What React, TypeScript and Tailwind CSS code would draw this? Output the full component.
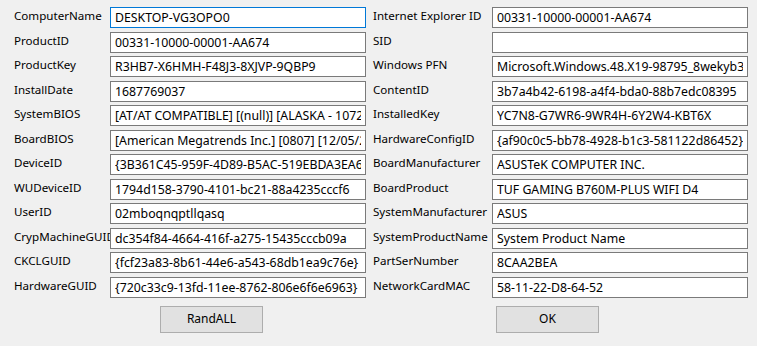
const left: [string, string][] = [
  ['ComputerName', 'DESKTOP-VG3OPO0'],
  ['ProductID', '00331-10000-00001-AA674'],
  ['ProductKey', 'R3HB7-X6HMH-F48J3-8XJVP-9QBP9'],
  ['InstallDate', '1687769037'],
  ['SystemBIOS', '[AT/AT COMPATIBLE] [(null)] [ALASKA - 1072009]'],
  ['BoardBIOS', '[American Megatrends Inc.] [0807] [12/05/2022]'],
  ['DeviceID', '{3B361C45-959F-4D89-B5AC-519EBDA3EA62}'],
  ['WUDeviceID', '1794d158-3790-4101-bc21-88a4235cccf6'],
  ['UserID', '02mboqnqptllqasq'],
  ['CrypMachineGUID', 'dc354f84-4664-416f-a275-15435cccb09a'],
  ['CKCLGUID', '{fcf23a83-8b61-44e6-a543-68db1ea9c76e}'],
  ['HardwareGUID', '{720c33c9-13fd-11ee-8762-806e6f6e6963}'],
]

const right: [string, string][] = [
  ['Internet Explorer ID', '00331-10000-00001-AA674'],
  ['SID', ''],
  ['Windows PFN', 'Microsoft.Windows.48.X19-98795_8wekyb3d8bbwe'],
  ['ContentID', '3b7a4b42-6198-a4f4-bda0-88b7edc08395'],
  ['InstalledKey', 'YC7N8-G7WR6-9WR4H-6Y2W4-KBT6X'],
  ['HardwareConfigID', '{af90c0c5-bb78-4928-b1c3-581122d86452}'],
  ['BoardManufacturer', 'ASUSTeK COMPUTER INC.'],
  ['BoardProduct', 'TUF GAMING B760M-PLUS WIFI D4'],
  ['SystemManufacturer', 'ASUS'],
  ['SystemProductName', 'System Product Name'],
  ['PartSerNumber', '8CAA2BEA'],
  ['NetworkCardMAC', '58-11-22-D8-64-52'],
]

function Field({ label, value, labelWidth, focused }: { label: string; value: string; labelWidth: string; focused?: boolean }) {
  return (
    <div className="flex h-[21px] items-start">
      <div className={`${labelWidth} shrink-0 whitespace-nowrap pt-[1px] text-[11.6px] leading-[16px]`}>{label}</div>
      <input
        readOnly
        value={value}
        className={`h-[21px] w-[256px] shrink-0 border bg-white px-[4px] text-[12.3px] leading-[19px] text-black outline-none ${
          focused ? 'border-[#0078d7]' : 'border-[#7a7a7a]'
        }`}
      />
    </div>
  )
}

export default function App() {
  return (
    <div
      className="h-[346px] w-[757px] overflow-hidden bg-[#f0f0f0] text-[12px] text-black"
      style={{ fontFamily: '"Noto Sans", "Open Sans", sans-serif' }}
    >
      <div className="flex pl-[14px] pt-[7px]">
        <div className="flex flex-col gap-[3.5px]">
          {left.map(([l, v], i) => (
            <Field key={l} label={l} value={v} labelWidth="w-[96px]" focused={i === 0} />
          ))}
        </div>
        <div className="ml-[7px] flex flex-col gap-[3.5px]">
          {right.map(([l, v]) => (
            <Field key={l} label={l} value={v} labelWidth="w-[119px]" />
          ))}
        </div>
      </div>
      <div className="mt-[8px] flex">
        <button className="ml-[160px] h-[27px] w-[103px] border border-[#adadad] bg-[#e1e1e1]">RandALL</button>
        <button className="ml-[233px] h-[27px] w-[103px] border border-[#adadad] bg-[#e1e1e1]">OK</button>
      </div>
    </div>
  )
}
